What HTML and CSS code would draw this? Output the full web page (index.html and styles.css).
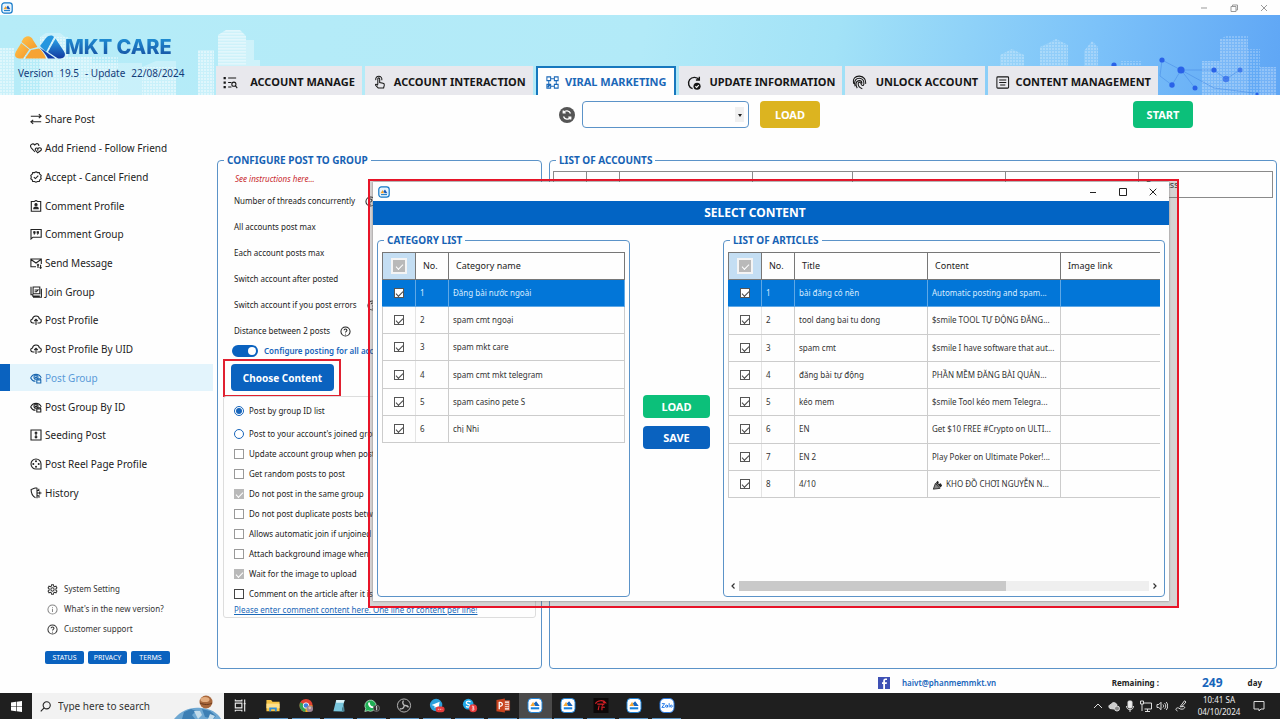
FILE: index.html
```html
<!DOCTYPE html>
<html lang="en">
<head>
<meta charset="utf-8">
<title>MKT CARE</title>
<meta name="viewport" content="width=device-width, initial-scale=1">
<link rel="stylesheet" href="styles.css">
</head>
<body>
<svg class="sprite" aria-hidden="true">
  <defs>
    <linearGradient id="gOrange" x1="0" y1="0" x2="1" y2="1"><stop offset="0" stop-color="#ffc14a"/><stop offset="1" stop-color="#f59a2b"/></linearGradient>
    <linearGradient id="gBlue" x1="0" y1="0" x2="0" y2="1"><stop offset="0" stop-color="#2aa4e8"/><stop offset="1" stop-color="#1238a0"/></linearGradient>
    <pattern id="windows" width="3" height="3" patternUnits="userSpaceOnUse"><path d="M0 0h2v2H0z" fill="#fff"/></pattern>
    <pattern id="floors" width="4" height="3" patternUnits="userSpaceOnUse"><path d="M0 0h4v1.6H0z" fill="#fff"/></pattern>
  </defs>
  <symbol id="app" viewBox="0 0 12 12"><rect x=".8" y=".8" width="10.4" height="10.4" rx="2.6" fill="#e8f6ff" stroke="#1478c8" stroke-width="1.2"/><path d="M2.5 7.2 4.6 4l1.6 3.2z" fill="#f5a32c"/><path d="M5.4 5.2 7 3.4l2.4 3.8H6.6z" fill="#1558b8"/><path d="M3 8.6h6" stroke="#1478c8"/></symbol>
  <symbol id="help" viewBox="0 0 12 12"><circle cx="6" cy="6" r="5" /><path d="M4.4 4.7c0-2 3.2-2 3.2 0 0 1.2-1.6 1.2-1.6 2.5M6 8.4v1"/></symbol>
  <symbol id="share" viewBox="0 0 12 12"><path d="M.8 3.2H11M8.8 1.2l2.3 2-2.3 2M11.2 8.8H1M3.2 6.8l-2.3 2 2.3 2"/></symbol>
  <symbol id="heart" viewBox="0 0 12 12"><path d="M5 10 1.2 5.8C-.8 3 2.8.4 4.8 3 6.6.6 9.2 1.8 8.8 4M7.7 10.8l-2.1-2.5c-1.1-2 1.2-3 2.4-1.7 1.3-1.7 4.3-.4 3.1 1.7zM7.8 6.3v2.4"/></symbol>
  <symbol id="verified" viewBox="0 0 12 12"><path d="m6 .8 1.5.8h1.8l.5 1.7 1.4 1.1-.5 1.6.5 1.7-1.4 1.1-.5 1.7H7.5l-1.5.7-1.5-.7H2.7l-.5-1.7L.8 7.7 1.3 6 .8 4.4l1.4-1.1.5-1.7h1.8zM3.8 6.1l1.6 1.5 2.9-3"/></symbol>
  <symbol id="idcard" viewBox="0 0 12 12"><path d="M1.3 1.5h3L6 .5l1.7 1h3v9.7H1.3z"/><circle cx="6" cy="4.7" r="1.1" fill="currentColor"/><path d="M3.8 8.8c0-2.4 4.4-2.4 4.4 0z" fill="currentColor"/></symbol>
  <symbol id="quote" viewBox="0 0 12 12"><path d="M1 11V1.5h10.2v7.7H3z"/><path d="M4.8 3.6v1.6l-.8 1.3M8.2 3.6v1.6l-.8 1.3"/><path d="M3.8 3.7h1v1.2h-1zM7.200 3.700h1v1.200h-1z" fill="currentColor"/></symbol>
  <symbol id="mail" viewBox="0 0 12 12"><path d="M6 9.8H.9V2h10.4v5M.9 2.5 6 6l5-3.5M8 7.3v3.8M7 8.3l1-1 1 1M10.6 11.3V7.8M9.6 10.3l1 1 1-1"/></symbol>
  <symbol id="join" viewBox="0 0 12 12"><path d="M3.1 1h6.7v6.8H3.1zM1 .8v8h1.8v1.3h7M11.4 2.8v8.5H3M4.6 4h3.6M4.6 5.8h2M6.3 6l2.2-2.6"/></symbol>
  <symbol id="cloud" viewBox="0 0 12 12"><path d="M4.5 9H3C.2 9-.1 5.4 2.5 5 3 1.2 8.7 1 9.3 4.7c2.8.3 2.7 4.3-.4 4.3H7.5M6 11V5.3M4.3 7 6 5.2 7.7 7"/></symbol>
  <symbol id="eye" viewBox="0 0 12 12"><path d="M5.5 9.3C3 9.2 1.5 7.6.7 5.9c2.1-4.7 8.5-4.7 10.6 0"/><circle cx="6" cy="5.3" r="2"/><path d="m5 5 1 1 1-1.4" fill="currentColor"/><path d="M6.8 8h4v3h-4zM8 8V6.8h2.5v1.3"/></symbol>
  <symbol id="seed" viewBox="0 0 12 12"><path d="M1 1h10v10H1zM6 3v6M4.7 4.4 6 3l1.3 1.4M4.7 7.6 6 9l1.3-1.4"/></symbol>
  <symbol id="reel" viewBox="0 0 12 12"><path d="M11 11H6a5 5 0 1 1 5-5z"/><g fill="currentColor" stroke="none"><circle cx="6" cy="3.3" r="1"/><circle cx="6" cy="8.7" r="1"/><circle cx="3.3" cy="6" r="1"/><circle cx="8.7" cy="6" r="1"/></g></symbol>
  <symbol id="history" viewBox="0 0 12 12"><path d="M5.500 10.800C2.300 9.200 1.100 6.300 1.100 2.600L5 1M7 .8v10.400M5 1h2M7 3.500h1.800V1.800M7 6h4.500M9.700 4.600v2.800M7 8.700h2v2"/></symbol>
  <symbol id="gear" viewBox="0 0 12 12"><path d="m5 .8-.3 1.5-1 .6-1.5-.5-1 1.8 1.1 1v1.6l-1.1 1 1 1.8 1.500-.5 1 .6.300 1.500h2l.300-1.500 1-.6 1.500.5 1-1.800-1.100-1V5.200l1.100-1-1-1.800-1.500.5-1-.6L7 .8z"/><circle cx="6" cy="6" r="1.8"/></symbol>
  <symbol id="info" viewBox="0 0 12 12"><circle cx="6" cy="6" r="5"/><path d="M6 5.2v3.5M6 3.2v1"/></symbol>
  <symbol id="tAccounts" viewBox="0 0 16 16"><path d="M5.5 3.2H14M5.5 8H9M5.5 12.8H9"/><path d="M1.8 2v2.4M1.8 6.8v2.4M1.8 11.6V14" stroke-width="2.4"/><circle cx="11.6" cy="9.8" r="2.2"/><path d="m13.2 11.4 2 2.6"/></symbol>
  <symbol id="tTouch" viewBox="0 0 16 16"><path d="M6.2 10V4.2c0-1.5 2-1.5 2 0V8l3.6.8c1.2.3 1.5 1 1.3 2l-.7 3H6.6L3.8 11c-.5-1 .8-1.7 2.4 0M4 5.5C3.2-.1 11.4-.1 10.5 5.600"/></symbol>
  <symbol id="tViral" viewBox="0 0 16 16"><path d="M2 2h4v4H2zM10 2h4v4h-4zM10 10h4v4h-4zM2 10h4v4H2zM6 4h4M6 12h4M4 6v4M12 6v4"/><path d="m2.8 12.8 2.6-2.7" stroke-width="2"/></symbol>
  <symbol id="tUpdate" viewBox="0 0 16 16"><path d="M14 5.2A6.2 6.2 0 1 0 7 14.6M14.2 1.8v3.6h-3.6" stroke-width="1.5"/><circle cx="11.8" cy="12" r="3.8" fill="currentColor" stroke="none"/><path d="m10 12 1.4 1.3 2.2-2.4" stroke="#fff"/></symbol>
  <symbol id="tFinger" viewBox="0 0 16 16"><path d="M2 9.5C0 3.5 4 1 8 1.2c5 .2 7 4.2 6.5 8.3M3.4 12C1.5 5.2 5 3.4 8 3.5c4 .2 5 3.4 4.6 6.5-.2 1.6-2.3 1.5-2.7 0C9.5 7 6.5 7 6.6 9.6c.1 2.4 1.4 4 4.4 5M5.600 14C3.300 10 4.200 6 8 6c2 0 2.500 1.500 2.600 3"/></symbol>
  <symbol id="tContent" viewBox="0 0 16 16"><rect x="2" y="2" width="12.5" height="12" rx="1"/><path d="M4.5 5.3H12M4.500 8H12M5.500 10.700H11"/></symbol>
  <symbol id="care" viewBox="0 0 16 16"><rect x=".5" y=".5" width="15" height="15" rx="4" fill="#fff" stroke="#1681dc"/><path d="M3 8.5 6 4l2 4.500z" fill="#f7a833"/><path d="m6.800 5.800 2.400-2.300L13 8.500H8.300z" fill="#1464bd"/><path d="M3.500 11h9" stroke="#1681dc" stroke-width="2.200"/></symbol>
</svg>

<div class="desktop">
  <div class="titlebar">
    <svg class="app-icon"><use href="#app"/></svg>
    <div class="win-buttons faded">
      <button type="button" aria-label="Minimize"><svg viewBox="0 0 8 8"><path d="M1 4h6"/></svg></button>
      <button type="button" aria-label="Restore"><svg viewBox="0 0 8 8"><path d="M1 2.5h5v5H1zM2.500 2.500V1H7.500v5H6"/></svg></button>
      <button type="button" aria-label="Close"><svg viewBox="0 0 8 8"><path d="m1 1 6 6M7 1 1 7"/></svg></button>
    </div>
  </div>

  <header class="banner">
    <svg class="skyline skyline-right" viewBox="0 0 300 80" aria-hidden="true">
      <g fill="url(#windows)" opacity=".22"><path d="M20 80V40l12-6 12 6v40zM60 80V32l6-2 10-6 12 6v50zM104 80V36l8-10 6 6v48zM140 80V46h22v34zM222 80V46h18v34zM240 80V24l8-4h20v60zM268 80V34h12v46zM280 80V52h16v28z"/></g>
      <g fill="#fff" opacity=".12"><path d="M20 80V40l12-6 12 6v40zM60 80V32l16-8 12 6v50zM104 80V36l8-10 6 6v48zM222 80V46h18v34zM240 80V24h28v56zM280 80V52h16v28z"/></g>
      <g fill="none" stroke="#4a8fe8" stroke-width=".6"><path d="m182 45 19 10 33 18 40 5M201 55l-9 15M201 55l14 18M182 45l-2 16 12 9M201 55l33 0 12 9 14-9"/></g>
      <g fill="#2a62e8"><circle cx="134" cy="50" r="2.600"/><circle cx="182" cy="45" r="2.600"/><circle cx="201" cy="55" r="3.600"/><circle cx="192" cy="70" r="2.700"/><circle cx="215" cy="73" r="2.500"/><circle cx="234" cy="55" r="2.600"/><circle cx="246" cy="64" r="3.300" opacity=".7"/><circle cx="260" cy="55" r="2.500" opacity=".7"/><circle cx="277" cy="79" r="1.500"/></g>
    </svg>
    <svg class="skyline skyline-mid" viewBox="0 0 60 80" aria-hidden="true"><path d="M2 80V20l8-5h14l6 6v59zM30 80V25h8v20h6v35z" fill="#fff" opacity=".35"/><path d="M2 80V20l8-5h14l6 6v59z" fill="url(#floors)" opacity=".4"/></svg>
    <div class="brand">
      <svg class="skyline skyline-left" viewBox="0 0 216 80" aria-hidden="true">
        <path d="M0 80V33h14v47zM40 80V22l6-4h14l8 6v56zM68 80V42h24v38zM92 80V48h50v32zM142 80V52l14-6h20v34zM198 80V35h16v45z" fill="#fff" opacity=".28"/>
        <path d="M0 80V33h14v47zM20 80V40h20v40zM40 80V22h28v58zM68 80V42h50v38zM142 80V52h34v28zM198 80V35h16v45z" fill="url(#windows)" opacity=".4"/>
      </svg>
      <div class="logo">
        <svg class="logo-mark" viewBox="0 0 50 24" aria-hidden="true">
          <path d="M7.500 5C10 0 16 0 18 5l4.500 7-7.500 2-8.500-7z" fill="url(#gOrange)"/><path d="M6.200 8 14.200 14.500 8 23.500H4c-4 0-5-3.500-3-7z" fill="url(#gOrange)"/><path d="m10 23.500 6-8.500 8-1.500c3 2 5 5 7 10z" fill="#f6a333"/>
          <path d="m25 11 6-8c3-3 6-3 8-1L31 17z" fill="#2596df"/><path d="M40.500 3.500 33 17l10 6.500h2.500c4.500 0 5.500-4 3.500-7z" fill="url(#gBlue)"/><path d="m24.500 12.500 16 11H33c-2-4-5-7-8.500-11z" fill="#123da8"/>
        </svg>
        <span class="logo-text">MKT CARE</span>
      </div>
      <div class="version"><span>Version</span><span>19.5</span><span>- Update</span><span>22/08/2024</span></div>
    </div>
    <nav class="tabs" aria-label="Modules">
      <a class="tab" href="#"><svg class="ico"><use href="#tAccounts"/></svg><span>ACCOUNT MANAGE</span></a>
      <a class="tab" href="#"><svg class="ico"><use href="#tTouch"/></svg><span>ACCOUNT INTERACTION</span></a>
      <a class="tab active" href="#"><svg class="ico"><use href="#tViral"/></svg><span>VIRAL MARKETING</span></a>
      <a class="tab" href="#"><svg class="ico"><use href="#tUpdate"/></svg><span>UPDATE INFORMATION</span></a>
      <a class="tab" href="#"><svg class="ico"><use href="#tFinger"/></svg><span>UNLOCK ACCOUNT</span></a>
      <a class="tab" href="#"><svg class="ico"><use href="#tContent"/></svg><span>CONTENT MANAGEMENT</span></a>
    </nav>
  </header>

  <div class="body">
    <aside class="sidebar">
      <nav class="menu" aria-label="Features">
        <a href="#"><svg class="ico"><use href="#share"/></svg>Share Post</a>
        <a href="#"><svg class="ico"><use href="#heart"/></svg>Add Friend - Follow Friend</a>
        <a href="#"><svg class="ico"><use href="#verified"/></svg>Accept - Cancel Friend</a>
        <a href="#"><svg class="ico"><use href="#idcard"/></svg>Comment Profile</a>
        <a href="#"><svg class="ico"><use href="#quote"/></svg>Comment Group</a>
        <a href="#"><svg class="ico"><use href="#mail"/></svg>Send Message</a>
        <a href="#"><svg class="ico"><use href="#join"/></svg>Join Group</a>
        <a href="#"><svg class="ico"><use href="#cloud"/></svg>Post Profile</a>
        <a href="#"><svg class="ico"><use href="#cloud"/></svg>Post Profile By UID</a>
        <a href="#" class="current"><svg class="ico"><use href="#eye"/></svg>Post Group</a>
        <a href="#"><svg class="ico"><use href="#eye"/></svg>Post Group By ID</a>
        <a href="#"><svg class="ico"><use href="#seed"/></svg>Seeding Post</a>
        <a href="#"><svg class="ico"><use href="#reel"/></svg>Post Reel Page Profile</a>
        <a href="#"><svg class="ico"><use href="#history"/></svg>History</a>
      </nav>
      <div class="support">
        <a href="#"><svg class="ico"><use href="#gear"/></svg>System Setting</a>
        <a href="#"><svg class="ico light"><use href="#info"/></svg>What's in the new version?</a>
        <a href="#"><svg class="ico"><use href="#help"/></svg>Customer support</a>
      </div>
      <div class="legal">
        <button type="button">STATUS</button><button type="button">PRIVACY</button><button type="button">TERMS</button>
      </div>
    </aside>

    <main class="main">
      <div class="toolbar">
        <button type="button" class="refresh" aria-label="Refresh"><svg viewBox="0 0 16 16"><circle cx="8" cy="8" r="8" fill="#555"/><path d="M4.5 9.5a4 4 0 0 0 7 1M11.500 6.500a4 4 0 0 0-7-1M4.300 3.500v2.400h2.400M11.700 12.500v-2.400H9.300" fill="none" stroke="#fff" stroke-width="1.4"/></svg></button>
        <div class="picker"><select aria-label="Account category"><option></option></select></div>
        <button type="button" class="btn gold">LOAD</button>
        <button type="button" class="btn green start">START</button>
      </div>
      <div class="panels">
        <fieldset class="panel config">
          <legend>CONFIGURE POST TO GROUP</legend>
          <a class="instructions" href="#">See instructions here...</a>
          <div class="settings">
            <div>Number of threads concurrently <svg class="ico"><use href="#help"/></svg></div>
            <div>All accounts post max</div>
            <div>Each account posts max</div>
            <div>Switch account after posted</div>
            <div>Switch account if you post errors <svg class="ico"><use href="#help"/></svg></div>
            <div>Distance between 2 posts <svg class="ico"><use href="#help"/></svg></div>
          </div>
          <label class="switch"><input type="checkbox" role="switch" checked>Configure posting for all accounts</label>
          <div class="highlight"><button type="button" class="btn blue choose">Choose Content</button></div>
          <div class="options">
            <label class="opt"><input type="radio" name="source" checked>Post by group ID list</label>
            <label class="opt second"><input type="radio" name="source">Post to your account's joined group</label>
            <label class="opt"><input type="checkbox">Update account group when posting</label>
            <label class="opt"><input type="checkbox">Get random posts to post</label>
            <label class="opt"><input type="checkbox" class="muted" checked>Do not post in the same group</label>
            <label class="opt"><input type="checkbox">Do not post duplicate posts between</label>
            <label class="opt"><input type="checkbox">Allows automatic join if unjoined</label>
            <label class="opt"><input type="checkbox">Attach background image when</label>
            <label class="opt"><input type="checkbox" class="muted" checked>Wait for the image to upload</label>
            <label class="opt"><input type="checkbox" class="strong">Comment on the article after it is</label>
            <a class="comment-link" href="#">Please enter comment content here. One line of content per line!</a>
          </div>
        </fieldset>
        <fieldset class="panel accounts">
          <legend>LIST OF ACCOUNTS</legend>
          <table class="account-table">
            <colgroup><col class="c33"><col class="c33"><col class="c133"><col class="c100"><col class="c153"><col class="c133"><col></colgroup>
            <thead><tr><th></th><th></th><th></th><th></th><th></th><th></th><th>Process</th></tr></thead>
          </table>
        </fieldset>
      </div>
      <footer class="status">
        <svg class="fb" viewBox="0 0 12 12" aria-hidden="true"><rect width="12" height="12" fill="#3f51b5"/><path d="M7 12V7h1.700L9 5.200H7V4c0-.7.300-1 1-1h1V1.400H7.500C5.900 1.400 5.200 2.400 5.200 4v1.200H4V7h1.200v5z" fill="#fff"/></svg>
        <a class="mail" href="#">haivt@phanmemmkt.vn</a>
        <span class="remaining">Remaining :</span>
        <span class="days">249</span>
        <span class="unit">day</span>
      </footer>
    </main>
  </div>

  <div class="taskbar">
    <button type="button" class="start-menu" aria-label="Start"><svg viewBox="0 0 12 12"><path d="m0 1.700 5.500-.8v4.900H0zM6.200.8 12 0v5.800H6.200zM0 6.400h5.500v4.800L0 10.400zM6.200 6.400H12V12l-5.800-.8z" fill="#fff"/></svg></button>
    <label class="search">
      <svg class="glass" viewBox="0 0 12 12"><circle cx="7.3" cy="4.7" r="3.900"/><path d="M4.500 7.500.8 11.200"/></svg>
      <input type="text" placeholder="Type here to search" aria-label="Type here to search">
      <svg class="globe" viewBox="0 0 50 26" aria-hidden="true"><path d="M0 26c8-9 16-12 27-11 9 0 17 5 20 11z" fill="#6fa8d2"/><path d="m10 19 7-3 5 2-4 4 3 4H8zM28 16l8 2 6 5-3 3-8-2z" fill="#3d7fb4"/><path d="M20 18h6l2 4-4 4zM36 21l5 2-2 3h-5z" fill="#c3dceb"/><circle cx="32" cy="9" r="6.500" fill="#a8673b"/><ellipse cx="31" cy="6.500" rx="4.500" ry="2.600" fill="#e3ad80"/><path d="M26 10c4 2 9 2 12 0" stroke="#6b3a1e" fill="none"/></svg>
    </label>
    <div class="apps">
      <button type="button" class="plain" aria-label="Task view"><svg viewBox="0 0 16 16"><path d="M3 1.500V3h7V1.500M3 14.500V13h7v1.500M3 5.500h7v5H3zM13 1.500v13M12 6h2" fill="none" stroke="#eee" stroke-width="1.200"/></svg></button>
      <button type="button" aria-label="File Explorer"><svg viewBox="0 0 16 16"><path d="M1 2h5l1.500 2H15v10H1z" fill="#f6c344"/><path d="M1 6h14v5H1z" fill="#ffe08a"/><path d="M4 14v-4h8v4h-2v-2H6v2z" fill="#2f8edb"/></svg></button>
      <button type="button" aria-label="Chrome"><svg viewBox="0 0 16 16"><circle cx="8" cy="8" r="7" fill="#e24133"/><path d="M8 8 2 4.500A7 7 0 0 0 7.500 15z" fill="#34a353"/><path d="M8 8h7a7 7 0 0 1-7.500 7z" fill="#fbc116"/><circle cx="8" cy="8" r="3.300" fill="#fff"/><circle cx="8" cy="8" r="2.500" fill="#3f7fe0"/><circle cx="12" cy="11.500" r="3.500" fill="#9d8494"/><circle cx="12" cy="10.500" r="1.500" fill="#e2bfae"/></svg></button>
      <button type="button" aria-label="Notes"><svg viewBox="0 0 16 16"><path d="M5 2h9l-3 12H2z" fill="#79c6dc"/><path d="m5 2 9 0-1 3-8 0z" fill="#dcf3f8"/><path d="m2 14 9 0 2-8 1 8-2 1z" fill="#4d8799"/></svg></button>
      <button type="button" aria-label="WhatsApp"><svg viewBox="0 0 20 16"><path d="M1 15.500 2.200 12A7 7 0 1 1 5 14.500z" fill="#1fae54" stroke="#dff5e6" stroke-width=".8"/><path d="M5.500 4.500c2-1.500 2 1 2.200 2 0 1 2 3 3 2.500 1 0 2 1 1 1.800-3 2-8-3.500-6.200-6.300z" fill="#fff"/><circle cx="15.500" cy="11.500" r="4" fill="#333" stroke="#999" stroke-width=".7"/><path d="m14.800 10 1-1v5" stroke="#fff" fill="none"/></svg></button>
      <button type="button" aria-label="OBS"><svg viewBox="0 0 16 16"><circle cx="8" cy="8" r="7" fill="#222" stroke="#bbb"/><path d="M7.500 2.800c-2 2 0 4.300 1 5.200M12.800 10c-1.500-3-4-1.800-4.500-2M3.500 11.500c3 .5 4.500-1 4.800-3.500" stroke="#bbb" stroke-width="1.500" fill="none"/></svg></button>
      <button type="button" aria-label="Telegram"><svg viewBox="0 0 18 16"><circle cx="8" cy="7.500" r="7" fill="#2ba0dc"/><path d="m3 7.500 9-3.700-1.500 8L7.800 9.500l-1.400 1.600-.3-2.500z" fill="#fff"/><rect x="7.500" y="9" width="10" height="6.500" rx="3" fill="#e53c3c"/><path d="M10 12.300h5" stroke="#ffc5c5" stroke-dasharray="1.500 .7"/></svg></button>
      <button type="button" aria-label="Skype"><svg viewBox="0 0 18 16"><circle cx="7" cy="6.500" r="6" fill="#1fa9e8"/><path d="M9.600 4C7 2 3.500 4 5.500 6c1.300 1 4 .6 3.500 2.600C8 10.500 5.500 9.800 4.500 9" fill="none" stroke="#fff" stroke-width="1.500"/><circle cx="12.500" cy="11" r="4.500" fill="#e53c3c"/><path d="M11.200 9c2.700-1 2.700 1.800.6 1.900 2.800 0 2.400 3-.8 2" stroke="#fff" fill="none"/></svg></button>
      <button type="button" aria-label="PowerPoint"><svg viewBox="0 0 16 16"><path d="M8 3h7v10H8z" fill="#f3d4cb" stroke="#c94a2a"/><path d="M10 6h4M10 8h4M10 10h4" stroke="#c94a2a"/><path d="m1 2 9-1.500v15L1 14z" fill="#c8431f"/><path d="M4 12V4.800c4-1 4.500 4.200.5 4" fill="none" stroke="#fff" stroke-width="1.400"/></svg></button>
      <button type="button" class="running" aria-label="MKT Care"><svg><use href="#care"/></svg></button>
      <button type="button" aria-label="MKT Pro"><svg><use href="#care"/></svg></button>
      <button type="button" aria-label="Red app"><svg viewBox="0 0 16 16"><path d="M0 0h16v16H0z" fill="#0c0808"/><path d="M2 6c2-4 9-4 11-1l-3-.5M4 6.500h7l-2 1.500M6 8l-1 5M9 13V9.500l3 .5" fill="none" stroke="#d61f26" stroke-width="1.200"/></svg></button>
      <button type="button" aria-label="MKT Post"><svg><use href="#care"/></svg></button>
      <button type="button" aria-label="Zalo"><svg viewBox="0 0 16 16"><rect x=".5" y=".5" width="15" height="15" rx="5" fill="#fff" stroke="#1b74e8"/><path d="M2.500 6h3L2.500 10h3M8.500 7.500v2.500M10.300 5.500V10" fill="none" stroke="#1b74e8"/><circle cx="7.400" cy="8.700" r="1.100" fill="none" stroke="#1b74e8"/><circle cx="12.600" cy="8.700" r="1.100" fill="none" stroke="#1b74e8"/></svg></button>
    </div>
    <div class="tray">
      <svg viewBox="0 0 12 12"><path d="M2 8l4-4 4 4"/></svg>
      <svg viewBox="0 0 12 12"><path d="M2 8.500C0 7 1 4.500 3 4.500 4 2 8 2 9 5l-3 4z" fill="#ccc"/><circle cx="9" cy="8.500" r="2.500" fill="#888"/></svg>
      <svg viewBox="0 0 12 12"><rect x="4" y="1" width="4" height="7" rx="1" fill="#eee"/><path d="M2.500 6c0 5 7 5 7 0M6 9.500V12"/></svg>
      <svg viewBox="0 0 12 12"><path d="M3 3h8.500v6H4.500M7.500 9v2.500M5 11.500h5M.5 1h3v3h-3zM2 4v7"/></svg>
      <svg viewBox="0 0 12 12"><path d="M1 4.500h1.800L5 2.300v7.400L2.800 7.500H1zM7 4.500c.8 1 .8 2 0 3M8.600 3.200c1.600 2 1.600 3.600 0 5.600M10.200 2c2 2.500 2 5.500 0 8"/></svg>
      <svg class="pen" viewBox="0 0 12 12"><path d="M2.500 11c-3-1-1-4 1-3l2 1c3 1 6-2 3-2.500L5 6.800l4.500-6L11 2 6.500 7"/></svg>
      <div class="clock"><span>10:41 SA</span><span>04/10/2024</span></div>
      <svg viewBox="0 0 12 12"><path d="M1 1.500h10v7.500H8L6 11V9H1z"/></svg>
    </div>
  </div>

  <div class="callout">
    <section class="dialog" role="dialog" aria-labelledby="dialog-title">
      <div class="dialog-bar">
        <svg class="app-icon"><use href="#app"/></svg>
        <div class="win-buttons">
          <button type="button" aria-label="Minimize"><svg viewBox="0 0 8 8"><path d="M1 4.500h6"/></svg></button>
          <button type="button" aria-label="Maximize"><svg viewBox="0 0 8 8"><path d="M.5.5h7v7h-7z"/></svg></button>
          <button type="button" aria-label="Close"><svg viewBox="0 0 8 8"><path d="m.7.7 6.600 6.600M7.300.7.7 7.300"/></svg></button>
        </div>
      </div>
      <h2 id="dialog-title">SELECT CONTENT</h2>
      <div class="dialog-body">
        <fieldset class="panel list">
          <legend>CATEGORY LIST</legend>
          <table class="grid categories">
            <colgroup><col class="c33"><col class="c33"><col></colgroup>
            <thead><tr><th class="all"><input type="checkbox" class="muted" checked aria-label="Select all categories"></th><th>No.</th><th>Category name</th></tr></thead>
            <tbody>
              <tr class="selected"><td><input type="checkbox" checked aria-label="Row 1"></td><td>1</td><td>Đăng bài nước ngoài</td></tr>
              <tr><td><input type="checkbox" checked aria-label="Row 2"></td><td>2</td><td>spam cmt ngoại</td></tr>
              <tr><td><input type="checkbox" checked aria-label="Row 3"></td><td>3</td><td>spam mkt care</td></tr>
              <tr><td><input type="checkbox" checked aria-label="Row 4"></td><td>4</td><td>spam cmt mkt telegram</td></tr>
              <tr><td><input type="checkbox" checked aria-label="Row 5"></td><td>5</td><td>spam casino pete S</td></tr>
              <tr><td><input type="checkbox" checked aria-label="Row 6"></td><td>6</td><td>chị Nhi</td></tr>
            </tbody>
          </table>
        </fieldset>
        <div class="actions">
          <button type="button" class="btn green">LOAD</button>
          <button type="button" class="btn blue">SAVE</button>
        </div>
        <fieldset class="panel list">
          <legend>LIST OF ARTICLES</legend>
          <table class="grid articles">
            <colgroup><col class="c33"><col class="c33"><col class="c133"><col class="c133"><col></colgroup>
            <thead><tr><th class="all"><input type="checkbox" class="muted" checked aria-label="Select all articles"></th><th>No.</th><th>Title</th><th>Content</th><th>Image link</th></tr></thead>
            <tbody>
              <tr class="selected"><td><input type="checkbox" checked aria-label="Row 1"></td><td>1</td><td>bài đăng có nền</td><td>Automatic posting and spam...</td><td></td></tr>
              <tr><td><input type="checkbox" checked aria-label="Row 2"></td><td>2</td><td>tool dang bai tu dong</td><td>$smile TOOL TỰ ĐỘNG ĐĂNG...</td><td></td></tr>
              <tr><td><input type="checkbox" checked aria-label="Row 3"></td><td>3</td><td>spam cmt</td><td>$smile I have software that aut...</td><td></td></tr>
              <tr><td><input type="checkbox" checked aria-label="Row 4"></td><td>4</td><td>đăng bài tự động</td><td>PHẦN MỀM ĐĂNG BÀI QUẢN...</td><td></td></tr>
              <tr><td><input type="checkbox" checked aria-label="Row 5"></td><td>5</td><td>kéo mem</td><td>$smile Tool kéo mem Telegra...</td><td></td></tr>
              <tr><td><input type="checkbox" checked aria-label="Row 6"></td><td>6</td><td>EN</td><td>Get $10 FREE #Crypto on ULTI...</td><td></td></tr>
              <tr><td><input type="checkbox" checked aria-label="Row 7"></td><td>7</td><td>EN 2</td><td>Play Poker on Ultimate Poker!...</td><td></td></tr>
              <tr><td><input type="checkbox" checked aria-label="Row 8"></td><td>8</td><td>4/10</td><td><svg class="popper" viewBox="0 0 12 12" aria-hidden="true"><path d="M1 11 3.500 4 9 10z" fill="#888" stroke="#222"/><path d="M4 3.500 6 .8l1.500 1.500L7 5l3-1 1.500 3-2 2z" fill="#222"/></svg>KHO ĐỒ CHƠI NGUYỄN N...</td><td></td></tr>
            </tbody>
          </table>
          <div class="hscroll" aria-hidden="true">
            <svg viewBox="0 0 6 8"><path d="M4.500 1.500 2 4l2.500 2.500"/></svg>
            <div class="track"><div class="thumb"></div></div>
            <svg viewBox="0 0 6 8"><path d="M1.500 1.500 4 4 1.500 6.500"/></svg>
          </div>
        </fieldset>
      </div>
    </section>
  </div>
</div>
</body>
</html>
```
FILE: styles.css
```css
* { box-sizing: border-box; }

body {
  margin: 0;
  font-family: "Noto Sans", "Open Sans", sans-serif;
  font-size: 8px;
  line-height: 12px;
  color: #222;
  background: #fefefe;
}

button, input, select { font: inherit; color: inherit; }
button { border: 0; padding: 0; background: none; cursor: pointer; }
a { color: inherit; text-decoration: none; }
svg { display: block; flex: none; }

.sprite { position: absolute; width: 0; height: 0; }

.ico {
  width: 12px;
  height: 12px;
  fill: none;
  stroke: currentColor;
  stroke-width: 1.1;
}

.desktop {
  position: relative;
  display: flex;
  flex-direction: column;
  min-height: 100vh;
  overflow: hidden;
}

/* Window title bar */
.titlebar {
  display: flex;
  align-items: center;
  justify-content: space-between;
  height: 15px;
  padding-left: 1px;
}
.app-icon { width: 12px; height: 12px; }
.win-buttons { display: flex; color: #222; }
.win-buttons button { width: 30px; height: 12px; display: grid; place-items: center; }
.win-buttons svg { width: 8px; height: 8px; fill: none; stroke: currentColor; stroke-width: 1; }
.titlebar .faded { color: #999; padding-right: 1px; }

/* Banner */
.banner {
  position: relative;
  display: flex;
  height: 80px;
  background: linear-gradient(100deg, #b6ecf8 0%, #b2eaf8 50%, #a2e2f7 65%, #7cc2f9 85%, #5fa6f5 100%);
}
.skyline { position: absolute; bottom: 0; height: 80px; }
.skyline-left { left: 0; width: 216px; }
.skyline-mid { left: 216px; width: 60px; }
.skyline-right { right: 0; width: 300px; }
.brand { position: relative; width: 216px; flex: none; padding: 20px 0 0 15px; }
.logo, .version { position: relative; display: flex; align-items: center; }
.logo { height: 24px; }
.logo-mark { width: 50px; height: 24px; }
.logo-text {
  font: 800 20px/24px Inter, sans-serif;
  background: linear-gradient(#2098dc, #164a9c);
  background-clip: text;
  color: transparent;
}
.version { gap: 6px; padding: 8px 0 0 3px; font-size: 10px; color: #143c78; }

.tabs {
  position: relative;
  flex: 1;
  display: grid;
  grid-template-columns: minmax(0, 146fr) minmax(0, 168fr) minmax(0, 140fr) minmax(0, 164fr) minmax(0, 140fr) minmax(0, 170fr);
  align-items: end;
  gap: 3px;
  padding-right: 122px;
}
.tab {
  display: flex;
  align-items: center;
  justify-content: space-between;
  height: 29px;
  padding: 3px 7px 0;
  background: #e8e8ed;
  color: #161616;
  font-size: 11px;
  font-weight: 700;
  white-space: nowrap;
}
.tab .ico { width: 15px; height: 15px; }
.tab.active { background: #fefefe; color: #1b68b8; border: 2px solid #1778be; border-bottom: 0; padding-top: 1px; }

/* Layout */
.body { flex: 1; display: grid; grid-template-columns: 213px minmax(0, 1fr); }

.sidebar { display: flex; flex-direction: column; padding: 10px 0 29px; }
.menu { display: flex; flex-direction: column; height: 402px; font-size: 10px; }
.menu a { flex: 1; display: flex; align-items: center; gap: 3px; margin: 1px 0; padding-left: 20px; border-left: 10px solid transparent; }
.menu .current { background: #e3f4fc; border-left-color: #0a62bf; color: #5a9ad8; }
.menu .current .ico { color: #1c68b0; }
.support { display: flex; flex-direction: column; gap: 8px; margin: auto 0 16px 47px; color: #333; }
.support a { display: flex; align-items: center; gap: 6px; }
.support .ico { width: 11px; height: 11px; }
.support .light { stroke: #888; }
.legal { display: flex; gap: 4px; padding-left: 45px; }
.legal button { width: 39px; height: 13px; border-radius: 2px; background: #0a62bf; color: #fff; font-size: 7px; line-height: 13px; }

.main { display: flex; flex-direction: column; padding: 6px 3px 0 4px; }
.toolbar { display: flex; align-items: center; height: 27px; padding-right: 84px; }
.refresh { width: 16px; height: 16px; margin-left: 342px; }
.refresh svg { width: 16px; height: 16px; }
.picker { position: relative; width: 167px; margin: 0 11px 0 7px; }
.picker select {
  display: block;
  appearance: none;
  width: 100%;
  height: 27px;
  border: 1px solid #5b93c8;
  border-radius: 4px;
  background: linear-gradient(#f0f0f0, #f0f0f0) no-repeat right 4px center / 9px 15px #fefefe;
}
.picker::after {
  content: "";
  position: absolute;
  right: 7px;
  top: 13px;
  border: 2px solid transparent;
  border-top: 3px solid #222;
  border-bottom: 0;
}
.btn { color: #fff; font-weight: 700; border-radius: 4px; font-size: 11px; line-height: 14px; }
.toolbar .btn { width: 60px; height: 27px; }
.gold { background: #dcb420; }
.green { background: #0cc07a; }
.blue { background: #0a62bf; }
.start { margin-left: auto; }

.panels { flex: 1; display: grid; grid-template-columns: 325px minmax(0, 1fr); gap: 7px; padding-top: 25px; }
.panel {
  min-width: 0;
  margin: 0;
  border: 1px solid #5b93c8;
  border-radius: 4px;
  padding: 0 5px;
}
.panel legend { margin-left: 1px; padding: 0 3px; color: #1662b4; font-size: 10px; line-height: 14px; font-weight: 700; }

.config { white-space: nowrap; overflow: hidden; }
.instructions { display: block; margin: 6px 0 3px 12px; font-style: italic; color: #c8282d; }
.settings div { display: flex; align-items: center; gap: 10px; height: 26px; padding-left: 11px; }
.settings .ico { width: 11px; height: 11px; }
.switch { display: flex; align-items: center; gap: 6px; height: 14px; padding-left: 9px; color: #1765bb; font-weight: 600; }
.switch input { appearance: none; width: 26px; height: 12px; margin: 0; border-radius: 6px; background: #0a62bf; display: flex; justify-content: flex-end; padding: 2px; }
.switch input::before { content: ""; width: 8px; height: 8px; border-radius: 50%; background: #fff; }
.highlight { width: 118px; margin-top: 1px; padding: 3px 5px 4px 6px; border: 2px solid #e02030; }
.choose { display: block; width: 103px; height: 27px; font-size: 10px; }

.options { margin-top: -1px; padding: 4px 10px 1px; border: 1px solid #ddd; border-radius: 3px; }
.opt { display: flex; align-items: center; gap: 5px; height: 20px; }
.opt.second { margin-top: 3px; }
.opt input, .grid input { appearance: none; flex: none; display: grid; place-items: center; width: 10px; height: 10px; margin: 0; border: 1px solid #999; background: #fff; }
.opt input[type="radio"] { border: 1px solid #1765bb; border-radius: 50%; }
.opt input[type="radio"]:checked::before { content: ""; width: 6px; height: 6px; border-radius: 50%; background: #1765bb; }
.opt input[type="checkbox"]:checked::before, .grid input:checked::before {
  content: "";
  width: 6px;
  height: 3px;
  border: solid #444;
  border-width: 0 0 1px 1px;
  transform: rotate(-45deg);
}
.opt .strong { border-color: #444; }
.opt .muted, .grid .muted { background: #b9b9b9; border-color: #b9b9b9; }
.opt input.muted:checked::before, .grid input.muted:checked::before { border-color: #fff; }
.comment-link { display: block; color: #1b68b8; text-decoration: underline; }

.accounts { padding: 0 3px; }
.accounts legend { margin-left: 3px; }
.account-table { width: 100%; table-layout: fixed; border-collapse: collapse; margin-top: 4px; font-size: 9px; }
.account-table th { height: 26px; padding: 0 7px; border: 1px solid #8a8a8a; text-align: left; font-weight: 400; }
.c33 { width: 33px; }
.c100 { width: 100px; }
.c133 { width: 133px; }
.c153 { width: 153px; }

.status { display: flex; align-items: center; height: 24px; padding: 4px 15px 0 661px; font-weight: 700; }
.fb { width: 12px; height: 12px; margin-right: 12px; }
.mail { color: #1765bb; font-weight: 600; }
.remaining { margin-left: auto; }
.days { margin: 0 25px 0 43px; color: #1765bb; font-size: 12px; }

/* Taskbar */
.taskbar { display: flex; height: 26px; background: #1f1f1f; color: #eee; }
.start-menu { width: 32px; display: grid; place-items: center; }
.start-menu svg { width: 11px; height: 11px; }
.search { display: flex; align-items: center; width: 192px; padding-left: 8px; background: #f2f2f2; color: #333; }
.search input { flex: 1; min-width: 0; border: 0; padding: 0 0 0 7px; background: none; font-size: 10px; }
.search input::placeholder { color: #333; opacity: 1; }
.glass { width: 11px; height: 11px; fill: none; stroke: #222; stroke-width: 1.2; }
.globe { width: 50px; height: 26px; }
.apps { display: flex; width: 459px; }
.apps button { flex: 1; display: grid; place-items: center; margin: 0 2px; border-bottom: 1px solid #5d95c4; }
.apps .plain { border-color: transparent; }
.apps .running { margin: 0; padding: 0 2px; background: #4a4a4a; }
.apps svg { width: 16px; height: 15px; }
.tray { display: flex; align-items: center; gap: 4px; margin-left: auto; padding-right: 15px; }
.tray svg { width: 12px; height: 12px; fill: none; stroke: #ddd; stroke-width: 1; }
.tray .pen { margin-left: 3px; }
.clock { display: flex; flex-direction: column; align-items: center; width: 48px; margin: 0 6px 0 4px; }

/* Framed dialog */
.callout {
  position: absolute;
  left: 368px;
  right: 101px;
  top: 179px;
  height: 429px;
  padding: 1px 8px 5px 3px;
  border: 2px solid #e81428;
  background: rgba(110, 100, 100, 0.28);
}
.dialog { display: flex; flex-direction: column; height: 100%; background: #fefefe; box-shadow: 0 0 2px #777; }
.dialog-bar { display: flex; align-items: center; justify-content: space-between; height: 19px; padding: 0 1px 0 5px; }
.dialog h2 { margin: 0; background: #0264c4; color: #fff; font-size: 12px; line-height: 24px; text-align: center; padding-right: 32px; }
.dialog-body { flex: 1; display: grid; grid-template-columns: 253px 67px minmax(0, 1fr); gap: 13px; padding: 8px 4px 4px; }
.list { display: flex; flex-direction: column; padding: 0 4px; }
.list legend { margin-left: 2px; }
.actions { display: flex; flex-direction: column; gap: 8px; padding-top: 162px; }
.actions .btn { height: 23px; }

.grid { width: 100%; margin-top: 5px; table-layout: fixed; border-collapse: collapse; }
.categories { height: 191px; }
.articles { height: 246px; }
.grid th { height: 27px; padding: 0 7px; border: 1px solid #777; text-align: left; font-weight: 400; font-size: 9px; }
.grid td { padding: 0 4px; border: 1px solid #ccc; white-space: nowrap; overflow: hidden; color: #333; }
.grid td:first-child { border-right-color: #e4e4e4; }
.articles th:last-child, .articles td:last-child { border-right: 0; }
.grid input { margin: 0 auto; border-color: #555; }
.grid .all { background: #c4def3; padding: 0; }
.grid .all input { width: 12px; height: 12px; outline: 2px solid #f4f4f4; }
.grid .selected td { background: #0276d8; color: #d8ecff; border-color: #5fa8e6; }
.grid .selected td:first-child { border-left-color: #0276d8; }
.popper { display: inline-block; width: 11px; height: 10px; margin-right: 3px; vertical-align: middle; }

.hscroll { display: flex; align-items: center; gap: 3px; height: 10px; margin: auto 2px 5px; }
.hscroll svg { width: 6px; height: 8px; fill: none; stroke: #333; stroke-width: 1.2; }
.track { flex: 1; height: 10px; background: #efefef; }
.thumb { width: 65%; height: 100%; background: #c9c9c9; }
```
